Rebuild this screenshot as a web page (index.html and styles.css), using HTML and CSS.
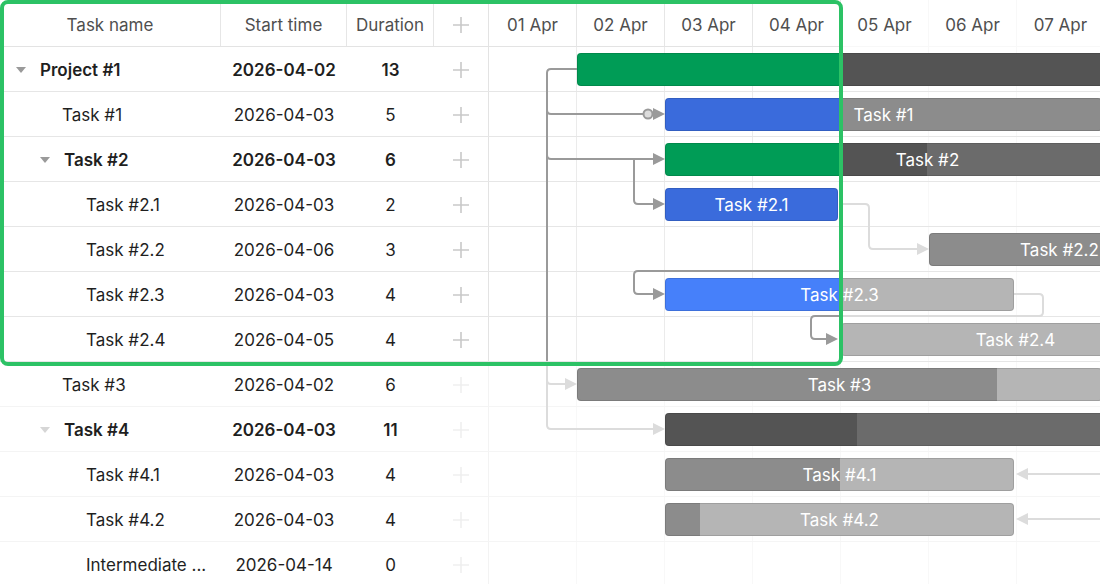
FILE: index.html
```html
<!DOCTYPE html>
<html lang="en">
<head>
<meta charset="UTF-8">
<meta name="viewport" content="width=device-width, initial-scale=1.0">
<title>Gantt</title>
<link rel="stylesheet" href="styles.css">
</head>
<body>

<div class="gantt">
  <div class="grid">
    <div class="grid-head">
      <div class="cell c-name">Task name</div>
      <div class="cell c-start">Start time</div>
      <div class="cell c-dur">Duration</div>
      <div class="cell c-add"><svg width="16" height="16" viewBox="0 0 16 16"><path d="M8 0v16M0 8h16" stroke="currentColor" stroke-width="1.6"/></svg></div>
    </div>

    <div class="row parent">
      <div class="cell c-name"><span class="toggle"></span><span class="label">Project #1</span></div>
      <div class="cell c-start">2026-04-02</div>
      <div class="cell c-dur">13</div>
      <div class="cell c-add"><svg width="16" height="16" viewBox="0 0 16 16"><path d="M8 0v16M0 8h16" stroke="currentColor" stroke-width="1.6"/></svg></div>
    </div>
    <div class="row l1">
      <div class="cell c-name"><span class="leaf"></span><span class="label">Task #1</span></div>
      <div class="cell c-start">2026-04-03</div>
      <div class="cell c-dur">5</div>
      <div class="cell c-add"><svg width="16" height="16" viewBox="0 0 16 16"><path d="M8 0v16M0 8h16" stroke="currentColor" stroke-width="1.6"/></svg></div>
    </div>
    <div class="row l1 parent">
      <div class="cell c-name"><span class="toggle"></span><span class="label">Task #2</span></div>
      <div class="cell c-start">2026-04-03</div>
      <div class="cell c-dur">6</div>
      <div class="cell c-add"><svg width="16" height="16" viewBox="0 0 16 16"><path d="M8 0v16M0 8h16" stroke="currentColor" stroke-width="1.6"/></svg></div>
    </div>
    <div class="row l2">
      <div class="cell c-name"><span class="leaf"></span><span class="label">Task #2.1</span></div>
      <div class="cell c-start">2026-04-03</div>
      <div class="cell c-dur">2</div>
      <div class="cell c-add"><svg width="16" height="16" viewBox="0 0 16 16"><path d="M8 0v16M0 8h16" stroke="currentColor" stroke-width="1.6"/></svg></div>
    </div>
    <div class="row l2">
      <div class="cell c-name"><span class="leaf"></span><span class="label">Task #2.2</span></div>
      <div class="cell c-start">2026-04-06</div>
      <div class="cell c-dur">3</div>
      <div class="cell c-add"><svg width="16" height="16" viewBox="0 0 16 16"><path d="M8 0v16M0 8h16" stroke="currentColor" stroke-width="1.6"/></svg></div>
    </div>
    <div class="row l2">
      <div class="cell c-name"><span class="leaf"></span><span class="label">Task #2.3</span></div>
      <div class="cell c-start">2026-04-03</div>
      <div class="cell c-dur">4</div>
      <div class="cell c-add"><svg width="16" height="16" viewBox="0 0 16 16"><path d="M8 0v16M0 8h16" stroke="currentColor" stroke-width="1.6"/></svg></div>
    </div>
    <div class="row l2">
      <div class="cell c-name"><span class="leaf"></span><span class="label">Task #2.4</span></div>
      <div class="cell c-start">2026-04-05</div>
      <div class="cell c-dur">4</div>
      <div class="cell c-add"><svg width="16" height="16" viewBox="0 0 16 16"><path d="M8 0v16M0 8h16" stroke="currentColor" stroke-width="1.6"/></svg></div>
    </div>

    <!-- rows below the focus box -->
    <div class="row l1 dim">
      <div class="cell c-name"><span class="leaf"></span><span class="label">Task #3</span></div>
      <div class="cell c-start">2026-04-02</div>
      <div class="cell c-dur">6</div>
      <div class="cell c-add"><svg width="16" height="16" viewBox="0 0 16 16"><path d="M8 0v16M0 8h16" stroke="currentColor" stroke-width="1.6"/></svg></div>
    </div>
    <div class="row l1 parent dim">
      <div class="cell c-name"><span class="toggle"></span><span class="label">Task #4</span></div>
      <div class="cell c-start">2026-04-03</div>
      <div class="cell c-dur">11</div>
      <div class="cell c-add"><svg width="16" height="16" viewBox="0 0 16 16"><path d="M8 0v16M0 8h16" stroke="currentColor" stroke-width="1.6"/></svg></div>
    </div>
    <div class="row l2 dim">
      <div class="cell c-name"><span class="leaf"></span><span class="label">Task #4.1</span></div>
      <div class="cell c-start">2026-04-03</div>
      <div class="cell c-dur">4</div>
      <div class="cell c-add"><svg width="16" height="16" viewBox="0 0 16 16"><path d="M8 0v16M0 8h16" stroke="currentColor" stroke-width="1.6"/></svg></div>
    </div>
    <div class="row l2 dim">
      <div class="cell c-name"><span class="leaf"></span><span class="label">Task #4.2</span></div>
      <div class="cell c-start">2026-04-03</div>
      <div class="cell c-dur">4</div>
      <div class="cell c-add"><svg width="16" height="16" viewBox="0 0 16 16"><path d="M8 0v16M0 8h16" stroke="currentColor" stroke-width="1.6"/></svg></div>
    </div>
    <div class="row l2 dim">
      <div class="cell c-name"><span class="leaf"></span><span class="label">Intermediate ...</span></div>
      <div class="cell c-start">2026-04-14</div>
      <div class="cell c-dur">0</div>
      <div class="cell c-add"><svg width="16" height="16" viewBox="0 0 16 16"><path d="M8 0v16M0 8h16" stroke="currentColor" stroke-width="1.6"/></svg></div>
    </div>
  </div>

  <div class="timeline">
    <div class="scale">
      <div class="day">01 Apr</div>
      <div class="day">02 Apr</div>
      <div class="day">03 Apr</div>
      <div class="day">04 Apr</div>
      <div class="day dim">05 Apr</div>
      <div class="day dim">06 Apr</div>
      <div class="day dim">07 Apr</div>
    </div>

    <div class="chart">
      <div class="tl-row"></div>
      <div class="tl-row"></div>
      <div class="tl-row"></div>
      <div class="tl-row"></div>
      <div class="tl-row"></div>
      <div class="tl-row"></div>
      <div class="tl-row"></div>
      <div class="tl-row dim"></div>
      <div class="tl-row dim"></div>
      <div class="tl-row dim"></div>
      <div class="tl-row dim"></div>
      <div class="tl-row dim"></div>

      <svg class="links" width="611" height="537" viewBox="0 0 611 537">
        <g class="link-off">
          <path d="M58 314 V378 Q58 382 62 382 H165"/>
          <path d="M58 333 Q58 337 62 337 H77"/>
          <path d="M352 157 H376 Q380 157 380 161 V198 Q380 202 384 202 H429"/>
          <path d="M525 247 H550 Q554 247 554 251 V265 Q554 269 550 269 H352"/>
          <path d="M539 427 H611"/>
          <path d="M539 472 H611"/>
          <polygon points="164,376 176,382 164,388"/>
          <polygon points="76,331 88,337 76,343"/>
          <polygon points="428,196 440,202 428,208"/>
          <polygon points="539,421 527,427 539,433"/>
          <polygon points="539,466 527,472 539,478"/>
        </g>
        <g class="link-on">
          <path d="M88 22 H62 Q58 22 58 26 V314"/>
          <path d="M58 63 Q58 67 62 67 H165"/>
          <path d="M58 108 Q58 112 62 112 H165"/>
          <path d="M145 112 V153 Q145 157 149 157 H165"/>
          <path d="M351 224 H149 Q145 224 145 228 V243 Q145 247 149 247 H165"/>
          <path d="M351 269 H326 Q322 269 322 273 V288 Q322 292 326 292 H338"/>
          <polygon points="164,61 176,67 164,73"/>
          <polygon points="164,106 176,112 164,118"/>
          <polygon points="164,151 176,157 164,163"/>
          <polygon points="164,241 176,247 164,253"/>
          <polygon points="337,286 349,292 337,298"/>
          <circle class="handle" cx="159" cy="67" r="4.5"/>
        </g>
      </svg>

      <div class="bar project" style="top:6px;left:88px;width:1141px;--a:263px;--b:263px"></div>
      <div class="bar task" style="top:51px;left:176px;width:437px;--a:175px;--b:175px">Task #1</div>
      <div class="bar summary" style="top:96px;left:176px;width:525px;--a:175px;--b:262px">Task #2</div>
      <div class="bar task" style="top:141px;left:176px;width:173px;--a:175px;--b:175px">Task #2.1</div>
      <div class="bar muted" style="top:186px;left:440px;width:261px">Task #2.2</div>
      <div class="bar active" style="top:231px;left:176px;width:349px;--a:175px;--b:175px">Task #2.3</div>
      <div class="bar faded" style="top:276px;left:352px;width:349px">Task #2.4</div>
      <div class="bar progress" style="top:321px;left:88px;width:525px;--a:420px;--b:420px">Task #3</div>
      <div class="bar summary-off" style="top:366px;left:176px;width:965px;--a:192px;--b:192px"></div>
      <div class="bar progress" style="top:411px;left:176px;width:349px;--a:175px;--b:175px">Task #4.1</div>
      <div class="bar progress" style="top:456px;left:176px;width:349px;--a:35px;--b:35px">Task #4.2</div>
    </div>
  </div>

  <div class="focus"></div>
</div>

</body>
</html>
```

FILE: styles.css
```css
body {
  margin: 0;
  font-family: Inter, "Noto Sans", sans-serif;
  font-size: 17px;
  color: #1f1f1f;
  background: #fff;
}
.gantt {
  position: relative;
  display: flex;
  width: 1100px;
  height: 584px;
  overflow: hidden;
}

/* left grid */
.grid {
  width: 489px;
  flex: none;
}
.grid-head,
.row {
  display: flex;
}
.grid-head {
  height: 46px;
  border-bottom: 1px solid #e3e3e3;
  color: #4f4f4f;
}
.grid-head .cell {
  padding-top: 3px;
}
.row {
  height: 44px;
  border-bottom: 1px solid #e6e6e6;
}
.row .cell {
  padding-top: 2px;
}
.row.dim {
  border-bottom-color: #f4f4f4;
}
.cell {
  display: flex;
  align-items: center;
  justify-content: center;
  box-sizing: border-box;
  white-space: nowrap;
}
.c-name { width: 221px; }
.c-start { width: 126px; }
.c-dur { width: 87px; }
.c-add {
  width: 55px;
  border-right: 1px solid #e3e3e3;
  color: #c9c9c9;
}
.grid-head .c-name,
.grid-head .c-start,
.grid-head .c-dur {
  border-right: 1px solid #e6e6e6;
}
.row .c-name {
  justify-content: flex-start;
  padding-left: 16px;
  padding-right: 8px;
}
.row.l1 .c-name { padding-left: 40px; }
.row.l2 .c-name { padding-left: 64px; }
.row.parent .label,
.row.parent .c-start,
.row.parent .c-dur {
  font-weight: 600;
}
.row.dim .c-add {
  border-right-color: #f3f3f3;
  color: #efefef;
}
.label {
  min-width: 0;
  overflow: hidden;
}
.toggle {
  flex: none;
  width: 24px;
  height: 6px;
}
.toggle::before {
  content: "";
  display: block;
  width: 0;
  height: 0;
  border-left: 5px solid transparent;
  border-right: 5px solid transparent;
  border-top: 6px solid #9a9a9a;
}
.row.dim .toggle::before {
  border-top-color: #d6d6d6;
}
.leaf {
  flex: none;
  width: 22px;
}

/* timeline */
.timeline {
  flex: 1;
  min-width: 0;
  overflow: hidden;
}
.scale {
  display: flex;
}
.day {
  flex: none;
  width: 88px;
  height: 47px;
  box-sizing: border-box;
  padding-top: 3px;
  display: flex;
  align-items: center;
  justify-content: center;
  border-right: 1px solid #e6e6e6;
  border-bottom: 1px solid #e3e3e3;
  color: #4f4f4f;
}
.day.dim {
  border-color: #f8f8f8;
}
.chart {
  position: relative;
  background:
    repeating-linear-gradient(to right, transparent 0 87px, #ebebeb 87px 88px) 0 0 / 352px 315px no-repeat,
    repeating-linear-gradient(to right, transparent 0 87px, #f8f8f8 87px 88px);
}
.tl-row {
  height: 44px;
  border-bottom: 1px solid #e6e6e6;
}
.tl-row.dim {
  border-bottom-color: #f5f5f5;
}
.links {
  position: absolute;
  left: 0;
  top: 0;
  overflow: visible;
}
.links path {
  fill: none;
  stroke-width: 2;
}
.link-off path { stroke: #dcdcdc; }
.link-off polygon { fill: #dcdcdc; }
.link-on path { stroke: #9a9a9a; }
.link-on polygon { fill: #9a9a9a; }
.links .handle {
  fill: #dcdcdc;
  stroke: #9a9a9a;
  stroke-width: 2;
}

/* bars */
.bar {
  position: absolute;
  height: 33px;
  padding-top: 1px;
  box-sizing: border-box;
  border-radius: 4px;
  box-shadow: inset 0 0 0 1px rgba(0, 0, 0, 0.12);
  display: flex;
  align-items: center;
  justify-content: center;
  color: #fff;
  white-space: nowrap;
  --a: 0px;
  --b: 0px;
  background: linear-gradient(to right, var(--c1) 0 var(--a), var(--c2) var(--a) var(--b), var(--c3) var(--b));
}
.bar.project { --c1: #009c56; --c2: #545454; --c3: #545454; }
.bar.task { --c1: #3a6bdc; --c2: #8c8c8c; --c3: #8c8c8c; }
.bar.summary { --c1: #009c56; --c2: #545454; --c3: #6b6b6b; }
.bar.muted { --c1: #8c8c8c; --c2: #8c8c8c; --c3: #8c8c8c; }
.bar.active { --c1: #4680fa; --c2: #b5b5b5; --c3: #b5b5b5; }
.bar.faded { --c1: #b5b5b5; --c2: #b5b5b5; --c3: #b5b5b5; }
.bar.progress { --c1: #8c8c8c; --c2: #b5b5b5; --c3: #b5b5b5; }
.bar.summary-off { --c1: #545454; --c2: #6b6b6b; --c3: #6b6b6b; }

/* highlighted area */
.focus {
  position: absolute;
  left: 0;
  top: 0;
  width: 843px;
  height: 366px;
  box-sizing: border-box;
  border: 4px solid #2cc265;
  border-radius: 8px;
  pointer-events: none;
}
```
